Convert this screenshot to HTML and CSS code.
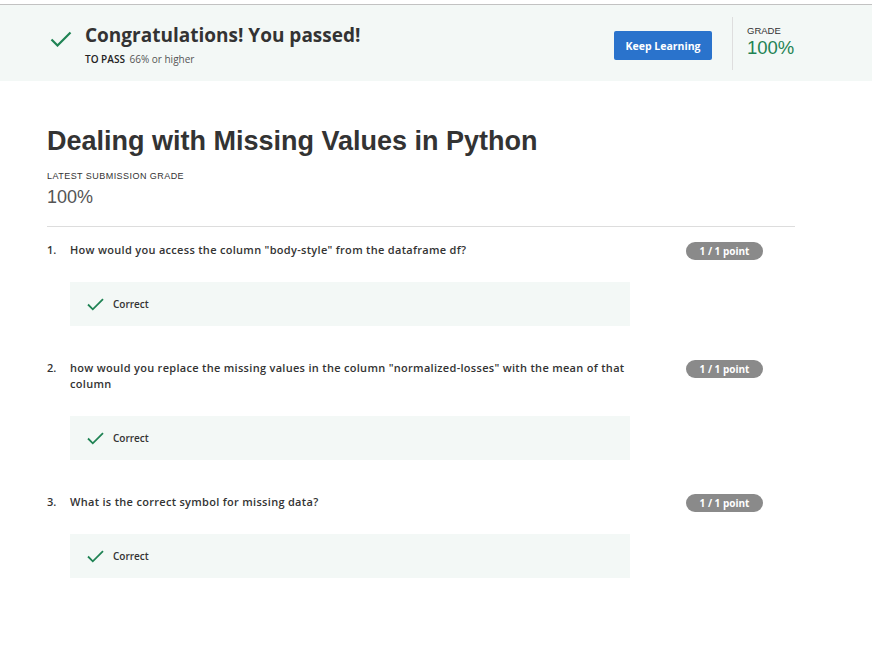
FILE: index.html
```html
<!DOCTYPE html>
<html>
<head>
<meta charset="utf-8">
<link rel="stylesheet" href="styles.css">
</head>
<body>
<div class="topline"></div>
<header class="banner">
  <div class="pass">
    <svg class="big-check" width="22" height="16" viewBox="0 0 22 16"><path d="M1.5 8.5 L7.5 14.5 L20.5 1.5" fill="none" stroke="#1f8354" stroke-width="2.2"/></svg>
    <div class="pass-text">
      <div class="pass-title">Congratulations! You passed!</div>
      <div class="pass-sub"><span class="pass-label">TO PASS</span> 66% or higher</div>
    </div>
  </div>
  <div class="banner-right">
    <button class="keep">Keep Learning</button>
    <div class="divider"></div>
    <div class="grade">
      <div class="grade-label">GRADE</div>
      <div class="grade-value">100%</div>
    </div>
  </div>
</header>
<main class="content">
  <h1 class="title">Dealing with Missing Values in Python</h1>
  <div class="latest-label">LATEST SUBMISSION GRADE</div>
  <div class="latest-value">100%</div>
  <div class="rule"></div>

  <section class="question">
    <div class="q-row">
      <div class="q-num">1.</div>
      <div class="q-text">How would you access the column "body-style" from the dataframe df?</div>
      <div class="badge">1 / 1 point</div>
    </div>
    <div class="result">
      <svg class="small-check" width="17" height="13" viewBox="0 0 17 13"><path d="M1 6.5 L5.8 11.3 L16 1.2" fill="none" stroke="#1f8354" stroke-width="1.8"/></svg>
      <span>Correct</span>
    </div>
  </section>

  <section class="question">
    <div class="q-row">
      <div class="q-num">2.</div>
      <div class="q-text">how would you replace the missing values in the column "normalized-losses" with the mean of that column</div>
      <div class="badge">1 / 1 point</div>
    </div>
    <div class="result">
      <svg class="small-check" width="17" height="13" viewBox="0 0 17 13"><path d="M1 6.5 L5.8 11.3 L16 1.2" fill="none" stroke="#1f8354" stroke-width="1.8"/></svg>
      <span>Correct</span>
    </div>
  </section>

  <section class="question">
    <div class="q-row">
      <div class="q-num">3.</div>
      <div class="q-text">What is the correct symbol for missing data?</div>
      <div class="badge">1 / 1 point</div>
    </div>
    <div class="result">
      <svg class="small-check" width="17" height="13" viewBox="0 0 17 13"><path d="M1 6.5 L5.8 11.3 L16 1.2" fill="none" stroke="#1f8354" stroke-width="1.8"/></svg>
      <span>Correct</span>
    </div>
  </section>
</main>
</body>
</html>
```

FILE: styles.css
```css
* { box-sizing: border-box; }
body {
  margin: 0;
  background: #fff;
  font-family: "Open Sans", "Liberation Sans", sans-serif;
  color: #333;
}
.topline {
  height: 5px;
  border-bottom: 1px solid #c2c2c2;
}
.banner {
  height: 76px;
  background: #f3f8f6;
  display: flex;
  align-items: center;
  justify-content: space-between;
  padding-left: 50px;
  padding-right: 76px;
}
.pass {
  display: flex;
  align-items: flex-start;
}
.big-check {
  margin-top: 9px;
  margin-right: 13px;
}
.pass-title {
  font-size: 19px;
  font-weight: 700;
  line-height: 26px;
  color: #333;
}
.pass-sub {
  font-size: 10px;
  color: #555;
  margin-top: 5px;
  line-height: 12px;
}
.pass-label {
  font-weight: 600;
  color: #222;
  margin-right: 2px;
}
.banner-right {
  display: flex;
  align-items: center;
  height: 100%;
}
.keep {
  width: 98px;
  height: 29px;
  background: #2a73cc;
  border: none;
  border-radius: 2px;
  color: #fff;
  font-family: "Open Sans", sans-serif;
  font-weight: 700;
  font-size: 10.5px;
  margin-top: 5px;
  padding: 0;
}
.divider {
  width: 1px;
  height: 53px;
  background: #dedede;
  margin-left: 20px;
  margin-right: 14px;
}
.grade {
  width: 49px;
  font-family: "Liberation Sans", Arial, sans-serif;
  margin-top: -4px;
}
.grade-label {
  font-size: 9.5px;
  color: #333;
  line-height: 12px;
}
.grade-value {
  font-size: 18.5px;
  color: #1f8354;
  line-height: 20px;
  margin-top: 1px;
}
.content {
  padding-left: 47px;
  width: 795px;
}
.title {
  font-family: "Liberation Sans", Arial, sans-serif;
  font-weight: 700;
  font-size: 27px;
  line-height: 32px;
  margin: 44px 0 0;
  color: #333;
}
.latest-label {
  font-family: "Liberation Sans", Arial, sans-serif;
  font-size: 9px;
  letter-spacing: 0.45px;
  color: #333;
  margin-top: 13px;
  line-height: 12px;
}
.latest-value {
  font-family: "Liberation Sans", Arial, sans-serif;
  font-size: 18px;
  color: #555;
  line-height: 22px;
  margin-top: 4px;
}
.rule {
  height: 1px;
  background: #dddddd;
  margin-top: 18px;
}
.question {
  padding-top: 15px;
  padding-bottom: 19px;
}
.q-row {
  display: flex;
  align-items: flex-start;
}
.q-num {
  width: 23px;
  font-size: 11px;
  font-weight: 600;
  line-height: 16px;
}
.q-text {
  width: 560px;
  font-size: 11px;
  font-weight: 600;
  line-height: 16px;
  letter-spacing: 0.3px;
}
.badge {
  margin-left: 56px;
  width: 77px;
  height: 18px;
  margin-bottom: -2px;
  border-radius: 9px;
  background: #8a8a8a;
  color: #fff;
  font-size: 10px;
  font-weight: 700;
  display: flex;
  align-items: center;
  justify-content: center;
}
.result {
  margin-left: 23px;
  margin-top: 24px;
  width: 560px;
  height: 44px;
  background: #f3f8f6;
  display: flex;
  align-items: center;
  padding-left: 17px;
  font-size: 10px;
  font-weight: 600;
  color: #333;
}
.small-check {
  margin-right: 9px;
}
```
